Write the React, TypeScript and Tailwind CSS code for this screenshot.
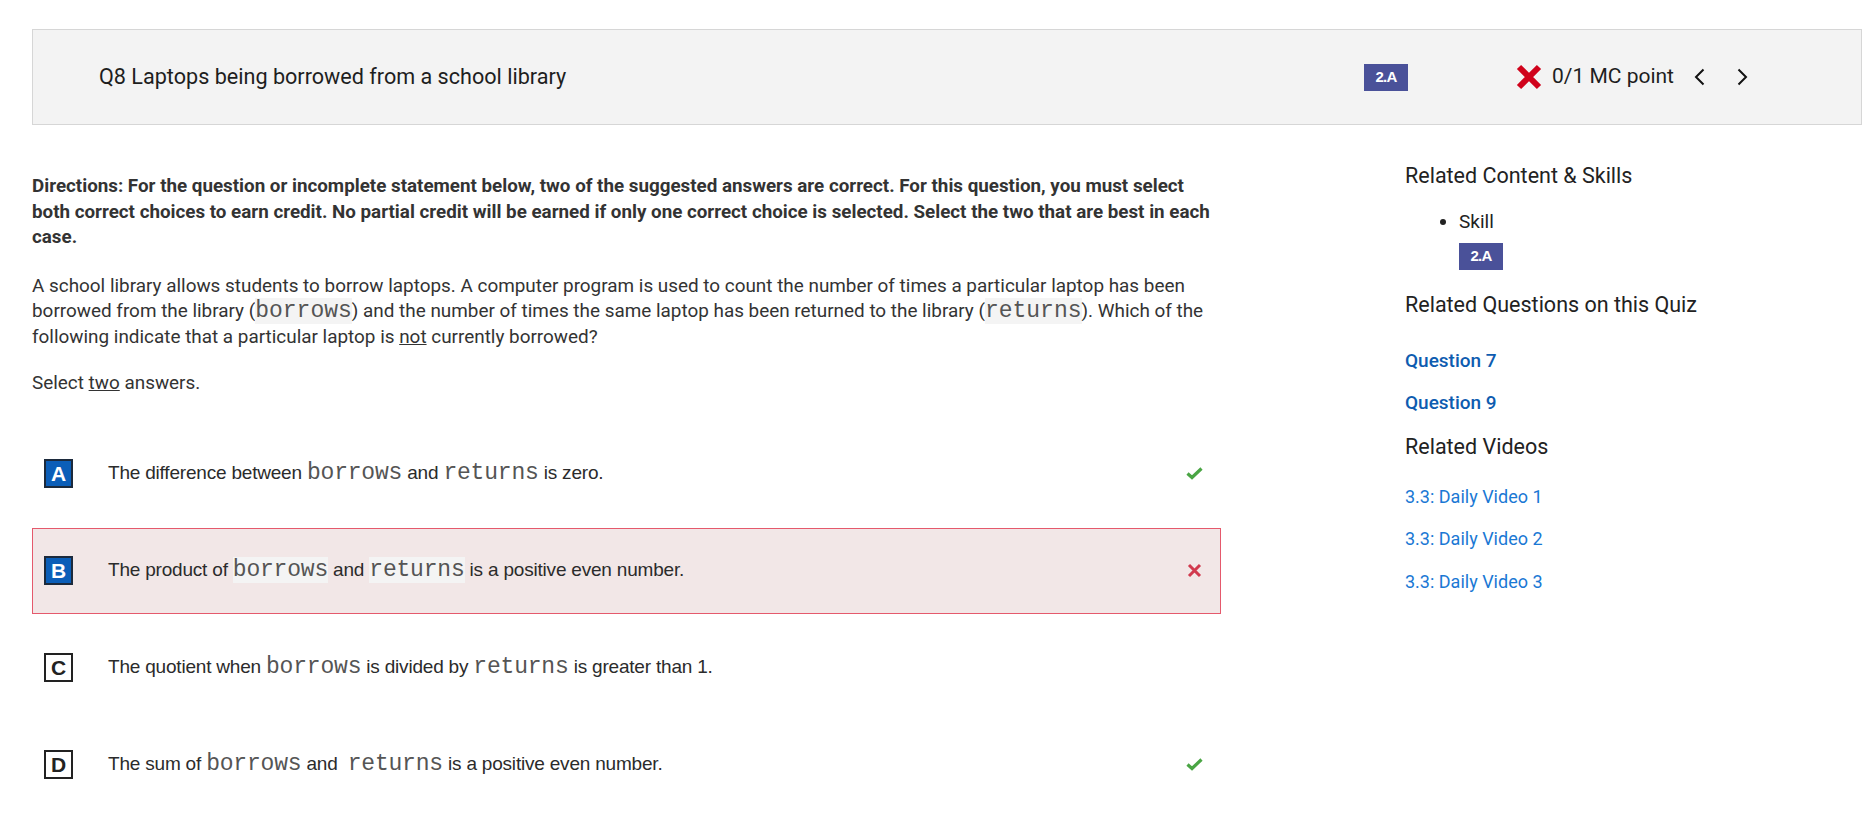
import type { ReactNode } from 'react';

type Option = {
  letter: string;
  filled: boolean;
  mark?: 'check' | 'cross';
  selectedWrong?: boolean;
  text: ReactNode;
};

const Code = ({ children, bg = false }: { children: ReactNode; bg?: boolean }) => (
  <span
    className={`font-['Liberation_Mono',monospace] text-[23px] leading-none text-[#555] ${
      bg ? 'bg-[#f4f4f4]' : ''
    }`}
  >
    {children}
  </span>
);

const Badge = () => (
  <span className="inline-flex h-[27px] w-[44px] items-center justify-center bg-[#4a5199] font-['Liberation_Sans',sans-serif] text-[15px] font-bold tracking-[-0.8px] text-white">
    2.A
  </span>
);

const CheckIcon = () => (
  <svg width="17" height="13" viewBox="0 0 17 13">
    <path d="M1.5 6.5 L6 10.5 L15.5 1.5" fill="none" stroke="#4aa544" strokeWidth="3.2" />
  </svg>
);

const CrossIcon = () => (
  <svg width="15" height="15" viewBox="0 0 15 15">
    <path d="M2 2 L13 13 M13 2 L2 13" fill="none" stroke="#d13a4e" strokeWidth="3" />
  </svg>
);

const options: Option[] = [
  {
    letter: 'A',
    filled: true,
    mark: 'check',
    text: (
      <>
        The difference between <Code>borrows</Code> and <Code>returns</Code> is zero.
      </>
    ),
  },
  {
    letter: 'B',
    filled: true,
    mark: 'cross',
    selectedWrong: true,
    text: (
      <>
        The product of <Code bg>borrows</Code> and <Code bg>returns</Code> is a positive even
        number.
      </>
    ),
  },
  {
    letter: 'C',
    filled: false,
    text: (
      <>
        The quotient when <Code>borrows</Code> is divided by <Code>returns</Code> is greater than
        1.
      </>
    ),
  },
  {
    letter: 'D',
    filled: false,
    mark: 'check',
    text: (
      <>
        The sum of <Code>borrows</Code> and&nbsp; <Code>returns</Code> is a positive even number.
      </>
    ),
  },
];

export default function App() {
  return (
    <div className="min-h-screen bg-white pl-[32px] pr-[4px] pt-[29px] font-['Roboto',sans-serif] text-[#222]">
      {/* Question header */}
      <div className="flex h-[96px] items-center border border-[#d6d6d6] bg-[#f3f3f3]">
        <h1 className="flex-1 pl-[66px] text-[21.6px] text-[#1e1e1e]">
          Q8 Laptops being borrowed from a school library
        </h1>
        <Badge />
        <div className="ml-[108px] flex items-center">
          <svg width="26" height="26" viewBox="0 0 26 26">
            <path d="M3 3 L23 23 M23 3 L3 23" fill="none" stroke="#d0021b" strokeWidth="6" />
          </svg>
          <span className="ml-[10px] text-[21px] text-[#1e1e1e]">0/1 MC point</span>
        </div>
        <svg className="ml-[20px]" width="11" height="18" viewBox="0 0 11 18">
          <path d="M9.5 1.5 L2 9 L9.5 16.5" fill="none" stroke="#111" strokeWidth="2" />
        </svg>
        <svg className="ml-[32px] mr-[113px]" width="11" height="18" viewBox="0 0 11 18">
          <path d="M1.5 1.5 L9 9 L1.5 16.5" fill="none" stroke="#111" strokeWidth="2" />
        </svg>
      </div>

      <div className="flex">
        {/* Question body */}
        <div className="w-[1189px] shrink-0">
          <p className="mt-[49px] text-[18.8px] font-bold leading-[25.5px] text-[#333]">
            Directions: For the question or incomplete statement below, two of the suggested
            answers are correct. For this question, you must select both correct choices to earn
            credit. No partial credit will be earned if only one correct choice is selected. Select
            the two that are best in each case.
          </p>
          <p className="mt-[22px] text-[18.9px] leading-[25.5px] text-[#333]">
            A school library allows students to borrow laptops. A computer program is used to count
            the number of times a particular laptop has been borrowed from the library (
            <Code bg>borrows</Code>) and the number of times the same laptop has been returned to
            the library (<Code bg>returns</Code>). Which of the following indicate that a particular
            laptop is <span className="underline">not</span> currently borrowed?
          </p>
          <p className="mt-[21px] text-[18.9px] leading-[25.5px] text-[#333]">
            Select <span className="underline">two</span> answers.
          </p>

          <div className="mt-[35px] flex flex-col gap-[11px]">
            {options.map((o) => (
              <div
                key={o.letter}
                className={`flex h-[86px] items-center border pl-[11px] pr-[17px] ${
                  o.selectedWrong
                    ? 'border-[#e5596c] bg-[#f2e7e7]'
                    : 'border-transparent bg-white'
                }`}
              >
                <span
                  className={`flex h-[29px] w-[29px] shrink-0 items-center justify-center border-2 font-['Liberation_Sans',sans-serif] text-[21px] font-bold ${
                    o.filled
                      ? 'border-[#1c2a3c] bg-[#0b5eb8] text-white'
                      : 'border-[#222] bg-white text-[#222]'
                  }`}
                >
                  {o.letter}
                </span>
                <div className="ml-[35px] flex-1 font-['Liberation_Sans',sans-serif] text-[19px] tracking-[-0.2px] text-[#2b2b2b]">
                  {o.text}
                </div>
                <div className="flex w-[17px] justify-center">
                  {o.mark === 'check' && <CheckIcon />}
                  {o.mark === 'cross' && <CrossIcon />}
                </div>
              </div>
            ))}
          </div>
        </div>

        {/* Sidebar */}
        <aside className="ml-[184px] flex flex-col">
          <h2 className="mt-[39px] text-[21.5px] leading-[24px] text-[#222]">
            Related Content &amp; Skills
          </h2>
          <ul className="mt-[22px] list-disc pl-[54px] text-[19px] leading-[24px]">
            <li>Skill</li>
          </ul>
          <div className="mt-[9px] pl-[54px]">
            <Badge />
          </div>
          <h2 className="mt-[23px] text-[21.5px] leading-[24px] text-[#222]">
            Related Questions on this Quiz
          </h2>
          <a className="mt-[32px] text-[19px] font-medium leading-[24px] text-[#0e5cb0]">
            Question 7
          </a>
          <a className="mt-[18px] text-[19px] font-medium leading-[24px] text-[#0e5cb0]">
            Question 9
          </a>
          <h2 className="mt-[20px] text-[21.5px] leading-[24px] text-[#222]">Related Videos</h2>
          <a className="mt-[26px] text-[18px] leading-[24px] text-[#1a78d4]">3.3: Daily Video 1</a>
          <a className="mt-[18px] text-[18px] leading-[24px] text-[#1a78d4]">3.3: Daily Video 2</a>
          <a className="mt-[19px] text-[18px] leading-[24px] text-[#1a78d4]">3.3: Daily Video 3</a>
        </aside>
      </div>
    </div>
  );
}
